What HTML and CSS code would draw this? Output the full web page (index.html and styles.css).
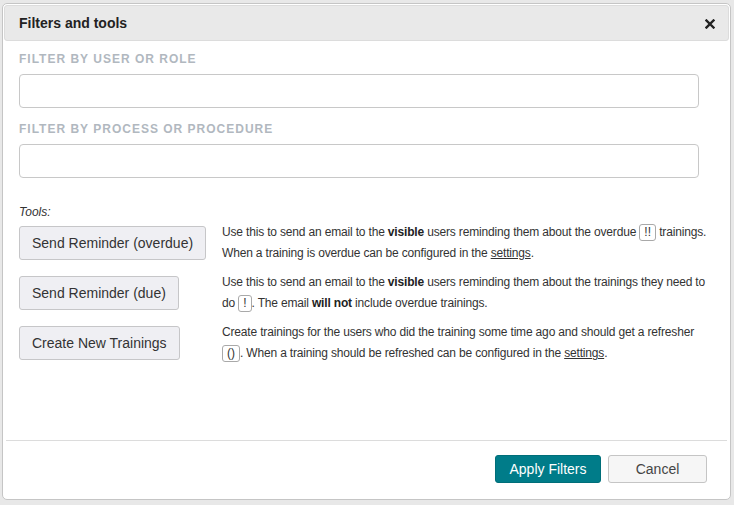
FILE: index.html
```html
<!DOCTYPE html>
<html lang="en">
  <head>
    <meta charset="UTF-8" />
    <title>Filters and tools</title>
    <link rel="stylesheet" href="styles.css">
  </head>
  <body>
    <div class="dialog">
      <!-- Title bar -->
      <div class="titlebar">
        <span class="title">Filters and tools</span>
        <button class="close" title="Close">
          <svg width="10" height="10" viewBox="0 0 10 10">
            <path d="M1.5 1.5 L8.5 8.5 M8.5 1.5 L1.5 8.5" stroke="#222" stroke-width="2.4" stroke-linecap="square" />
          </svg>
        </button>
      </div>

      <div class="content">
        <label class="filter-label" for="filter-user">Filter by user or role</label>
        <input class="filter-input" type="text" id="filter-user" />

        <label class="filter-label" for="filter-process">Filter by process or procedure</label>
        <input class="filter-input" type="text" id="filter-process" />

        <p class="tools-title">Tools:</p>
        <div class="tools">
          <div class="tool-btn-cell"><button class="tool-btn">Send Reminder (overdue)</button></div>
          <p class="tool-desc">
            Use this to send an email to the <b>visible</b> users reminding them about the overdue
            <span class="badge">!!</span> trainings. When a training is overdue can be configured in the
            <a href="#">settings</a>.
          </p>

          <div class="tool-btn-cell"><button class="tool-btn">Send Reminder (due)</button></div>
          <p class="tool-desc">
            Use this to send an email to the <b>visible</b> users reminding them about the trainings they need to
            do <span class="badge">!</span>. The email <b>will not</b> include overdue trainings.
          </p>

          <div class="tool-btn-cell"><button class="tool-btn">Create New Trainings</button></div>
          <p class="tool-desc">
            Create trainings for the users who did the training some time ago and should get a refresher
            <span class="badge">()</span>. When a training should be refreshed can be configured in the
            <a href="#">settings</a>.
          </p>
        </div>
      </div>

      <div class="footer">
        <button class="btn btn-primary">Apply Filters</button>
        <button class="btn btn-cancel">Cancel</button>
      </div>
    </div>
  </body>
</html>
```

FILE: styles.css
```css
* {
  margin: 0;
  padding: 0;
  box-sizing: border-box;
  font-family: "Liberation Sans", Arial, sans-serif;
}
body {
  background: #e8e8e8;
  color: #333;
  height: 505px;
  overflow: hidden;
}
.dialog {
  margin: 3px 3px 0 2px;
  height: 497px;
  background: #fff;
  border: 1px solid #c5c5c5;
  border-radius: 5px;
  padding: 1px;
  display: flex;
  flex-direction: column;
}
.titlebar {
  height: 36px;
  background: #e9e9e9;
  border: 1px solid #dcdcdc;
  border-radius: 3px;
  display: flex;
  align-items: center;
  justify-content: space-between;
  padding: 0 12px 0 14px;
}
.title {
  font-size: 14px;
  font-weight: bold;
  color: #222;
}
.close {
  border: none;
  background: transparent;
  width: 12px;
  height: 12px;
  display: flex;
  align-items: center;
  justify-content: center;
  cursor: pointer;
  margin-top: 2px;
}
.content {
  flex: 1;
  padding: 11px 15px 0 15px;
}
.filter-label {
  display: block;
  font-size: 12px;
  font-weight: bold;
  letter-spacing: 1px;
  text-transform: uppercase;
  color: #b1b8bf;
  height: 15px;
  margin-bottom: 7px;
}
.filter-input {
  display: block;
  width: 680px;
  height: 34px;
  border: 1px solid #c8c8c8;
  border-radius: 4px;
  margin-bottom: 14px;
}
.tools-title {
  font-size: 12px;
  font-style: italic;
  color: #333;
  margin-top: 26px;
  line-height: 16px;
}
.tools {
  display: grid;
  grid-template-columns: 203px 492px;
  row-gap: 6px;
}
.tool-btn-cell {
  padding-top: 6px;
}
.tool-btn {
  height: 34px;
  padding: 0 12px;
  font-size: 14px;
  color: #333;
  background: #efeff3;
  border: 1px solid #c6c6c8;
  border-radius: 3px;
  cursor: pointer;
}
.tool-desc {
  padding-top: 2px;
  font-size: 12px;
  line-height: 21px;
  letter-spacing: -0.17px;
  color: #333;
}
.tool-desc b {
  color: #222;
}
.tool-desc a {
  color: #333;
}
.badge {
  display: inline-block;
  border: 1px solid #a9a9a9;
  border-radius: 3px;
  padding: 0 4px;
  line-height: 15px;
  font-size: 12px;
  letter-spacing: 0;
  vertical-align: middle;
}
.footer {
  margin: 0 2px;
  border-top: 1px solid #dcdcdc;
  height: 58px;
  display: flex;
  justify-content: flex-end;
  align-items: flex-start;
  gap: 7px;
  padding: 14px 20px 0 0;
}
.btn {
  height: 28px;
  font-size: 14px;
  border-radius: 3px;
  cursor: pointer;
}
.btn-primary {
  width: 106px;
  background: #007c89;
  border: 1px solid #006e79;
  color: #fff;
}
.btn-cancel {
  width: 99px;
  background: #f6f6f6;
  border: 1px solid #c5c5c5;
  color: #454545;
}
```
